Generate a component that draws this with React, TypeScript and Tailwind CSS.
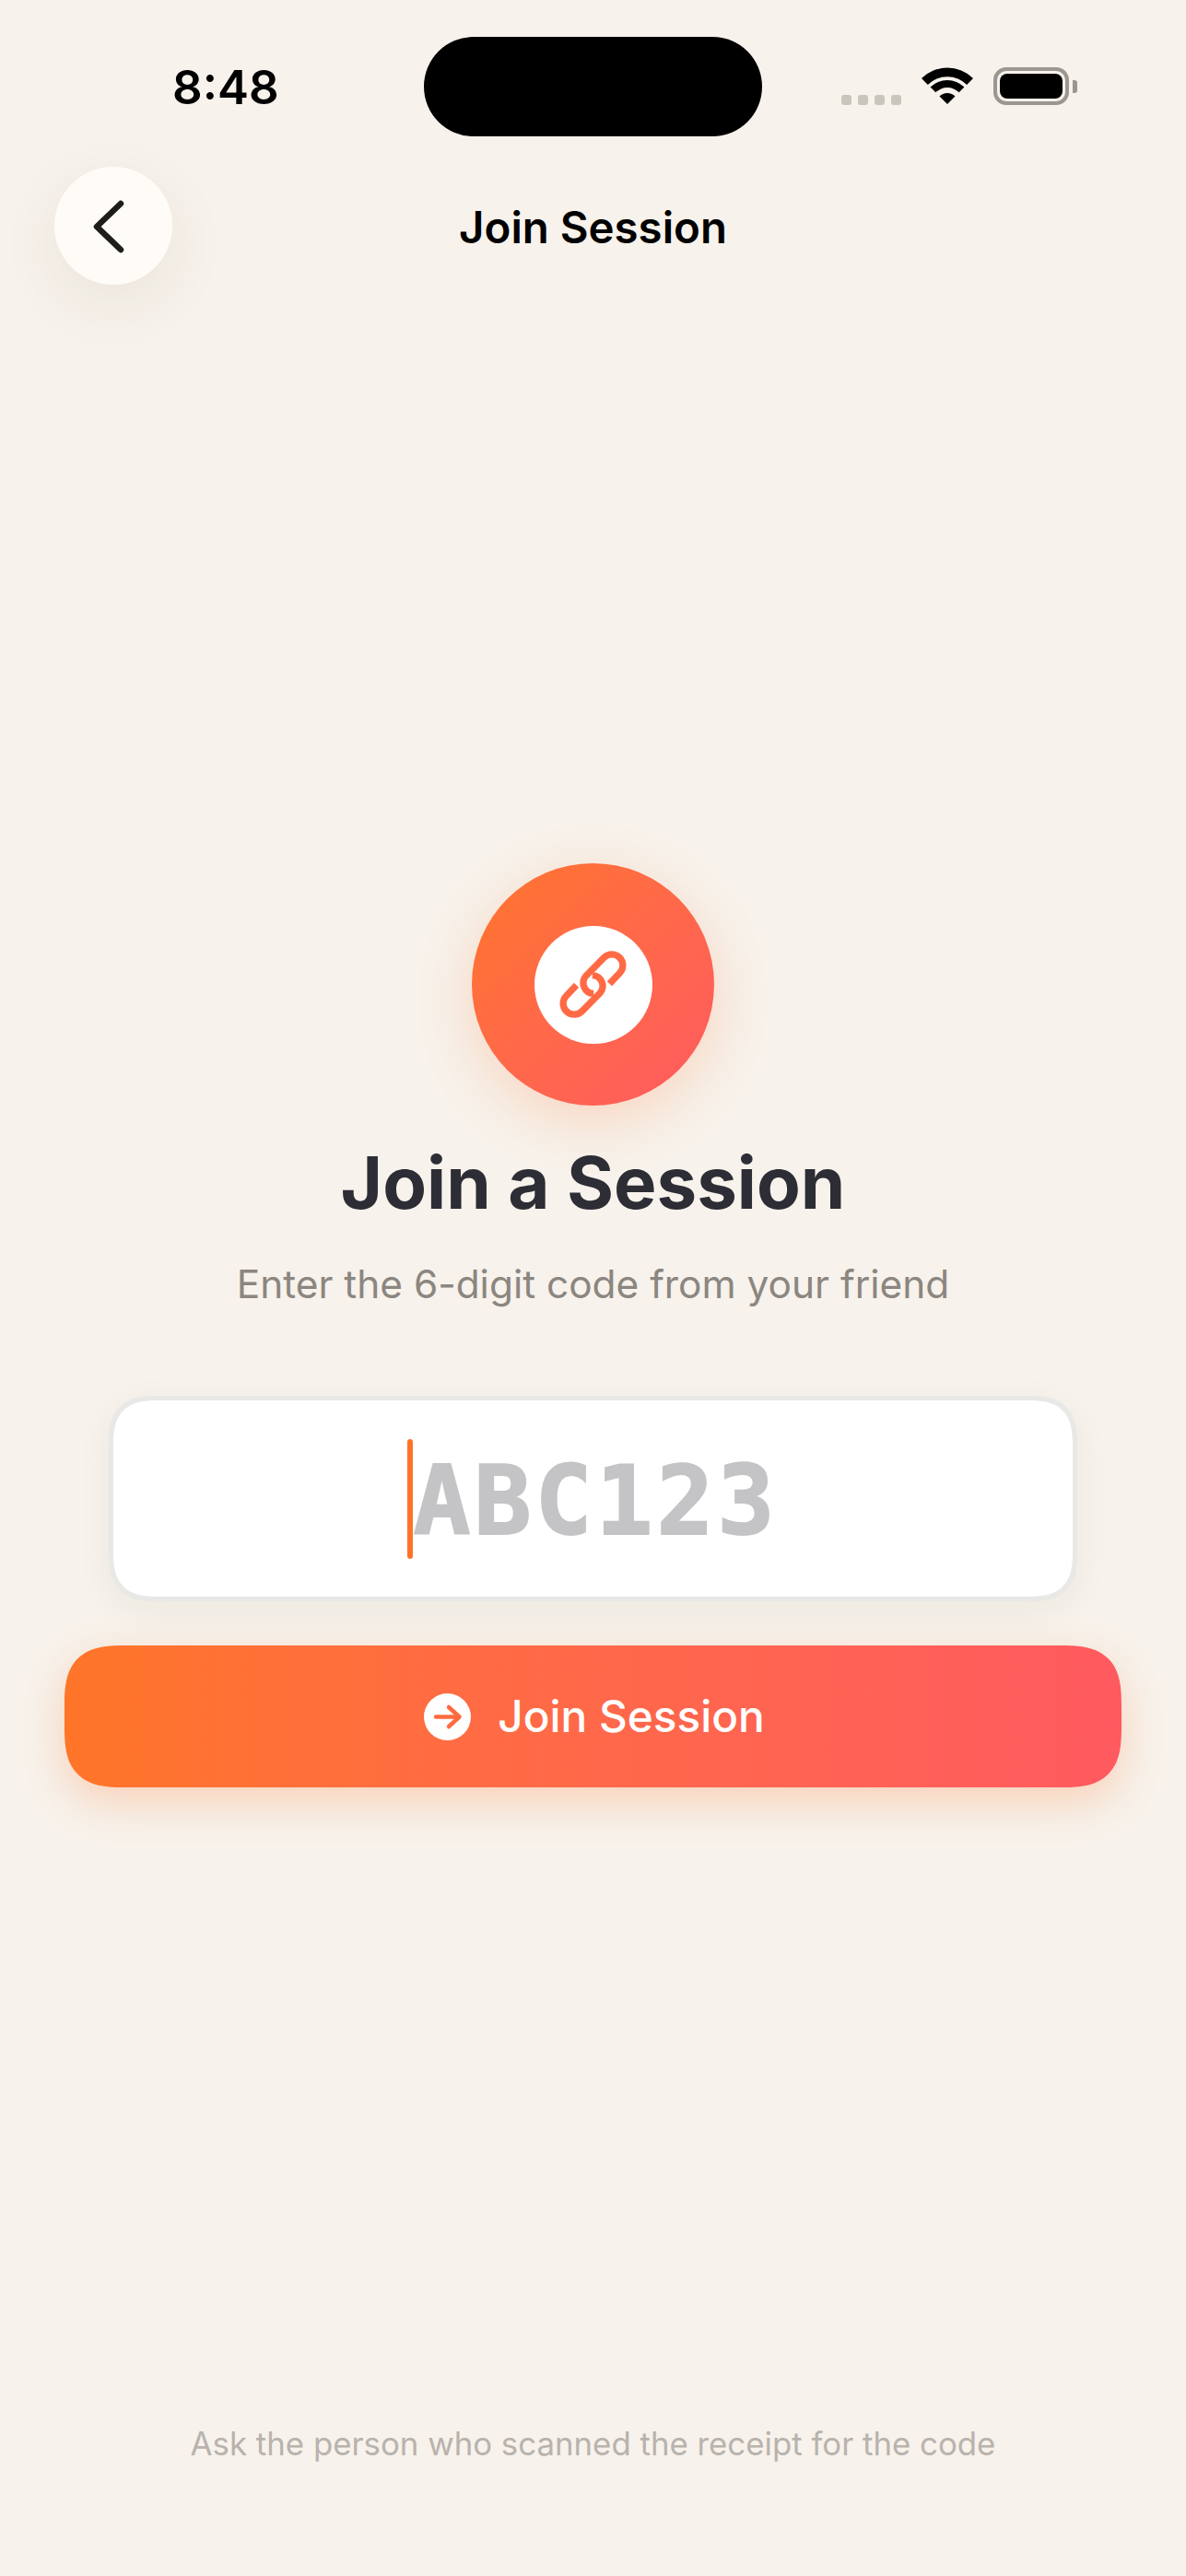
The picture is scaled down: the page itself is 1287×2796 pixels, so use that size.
import React from "react";

const inter = "font-['Inter',sans-serif]";

function Wifi() {
  return (
    <svg width="56" height="40" viewBox="0 0 56 40" className="block">
      <path d="M0 12 A40 40 0 0 1 56 12 L49.2 19 A30 30 0 0 0 6.8 19 Z" fill="#000" />
      <path d="M9.6 21.6 A26 26 0 0 1 46.4 21.6 L40.7 27.3 A18 18 0 0 0 15.3 27.3 Z" fill="#000" />
      <path d="M19.5 31.5 A12 12 0 0 1 36.5 31.5 L28 40 Z" fill="#000" />
    </svg>
  );
}

function LinkIcon() {
  return (
    <svg width="73" height="73" viewBox="437 395 218 220" fill="none" className="block">
      <path d="M600 503 L633 468 A36 36 0 0 0 582 417 L523 477 A35 35 0 0 0 548 535" stroke="#ff6a45" strokeWidth="22" strokeLinejoin="round" />
      <path d="M492 507 L459 542 A36 36 0 0 0 510 593 L569 533 A35 35 0 0 0 544 475" stroke="#ff6a45" strokeWidth="22" strokeLinejoin="round" />
    </svg>
  );
}

export default function App() {
  return (
    <div className={`${inter} flex h-[2796px] w-full flex-col items-center bg-[#f7f2eb]`}>
      <div className="mt-[40px] flex h-[108px] w-full items-center">
        <div className="w-[460px] pl-[187px] text-[51px] font-semibold leading-none text-black">8:48</div>
        <div className="h-[108px] w-[367px] rounded-[54px] bg-black" />
        <div className="flex h-full flex-1 items-start pl-[86px] pt-[33px]">
          <div className="mt-[30px] flex gap-[7px]">
            <span className="h-[11px] w-[11px] rounded-[3px] bg-[#c8c5bd]" />
            <span className="h-[11px] w-[11px] rounded-[3px] bg-[#c8c5bd]" />
            <span className="h-[11px] w-[11px] rounded-[3px] bg-[#c8c5bd]" />
            <span className="h-[11px] w-[11px] rounded-[3px] bg-[#c8c5bd]" />
          </div>
          <div className="ml-[22px]">
            <Wifi />
          </div>
          <div className="ml-[22px] flex items-center">
            <div className="h-[41px] w-[82px] rounded-[14px] border-[4px] border-[#9a9690] p-[3px]">
              <div className="h-full w-full rounded-[8px] bg-black" />
            </div>
            <div className="ml-[4px] h-[14px] w-[5px] rounded-r-[3px] bg-[#9a9690]" />
          </div>
        </div>
      </div>

      <div className="mt-[33px] grid h-[128px] w-full grid-cols-[1fr_auto_1fr] items-center">
        <div className="pl-[59px]">
          <button className="h-[128px] w-[128px] rounded-full bg-[#fffcf7] shadow-[0_20px_70px_rgba(60,40,20,0.07)]">
            <svg width="128" height="128" viewBox="0 0 128 128" fill="none" className="block">
              <path d="M72 40 L46 65 L72 90" stroke="#1f1d1a" strokeWidth="6.5" strokeLinecap="round" strokeLinejoin="round" />
            </svg>
          </button>
        </div>
        <div className="-translate-y-[1px] text-[47.4px] font-semibold leading-[56px] text-black">Join Session</div>
        <div />
      </div>

      <div className="mt-[628px] flex h-[263px] w-[263px] items-center justify-center rounded-full bg-gradient-to-br from-[#ff7529] to-[#ff5a5f] shadow-[0_16px_60px_rgba(255,115,40,0.22)]">
        <div className="flex h-[128px] w-[128px] items-center justify-center rounded-full bg-white">
          <LinkIcon />
        </div>
      </div>

      <h1 className="mt-[37px] text-[78px] font-bold leading-[94px] text-[#2d2d35]">Join a Session</h1>
      <p className="mt-[35px] text-[42.4px] leading-[56px] text-[#8b8680]">Enter the 6-digit code from your friend</p>

      <div className="mt-[93px] flex h-[223px] w-[1051px] items-center justify-center rounded-[55px] border-[5px] border-[#e8e8e6] bg-white shadow-[0_10px_40px_rgba(40,30,20,0.05)] [corner-shape:superellipse(1.5)]">
        <span className="h-[130px] w-[6px] rounded-full bg-[#ff7329]" />
        <span className="pt-[6px] font-['DejaVu_Sans_Mono',monospace] text-[103px] font-bold leading-none tracking-[4px] text-[#c4c4c6] [-webkit-text-stroke:2px_#c4c4c6]">ABC123</span>
      </div>

      <button className="mt-[48px] flex h-[154px] w-[1147px] items-center justify-center gap-[29px] rounded-[66px] bg-gradient-to-r from-[#ff7528] to-[#ff5a5f] pl-[3px] shadow-[0_16px_44px_rgba(255,115,40,0.25)] [corner-shape:superellipse(1.5)]">
        <svg width="51" height="51" viewBox="0 0 51 51" fill="none" className="block">
          <circle cx="25.5" cy="25.5" r="25.5" fill="#fff" />
          <path d="M13 25.5 H38 M27 15 L38.5 25.5 L27 36" stroke="#ff6b3f" strokeWidth="4.5" strokeLinecap="round" strokeLinejoin="round" />
        </svg>
        <span className="text-[47.7px] font-medium leading-[56px] text-white">Join Session</span>
      </button>

      <p className="mb-[122px] mt-auto text-[34.8px] leading-[44px] text-[#b8b3ad]">Ask the person who scanned the receipt for the code</p>
    </div>
  );
}
